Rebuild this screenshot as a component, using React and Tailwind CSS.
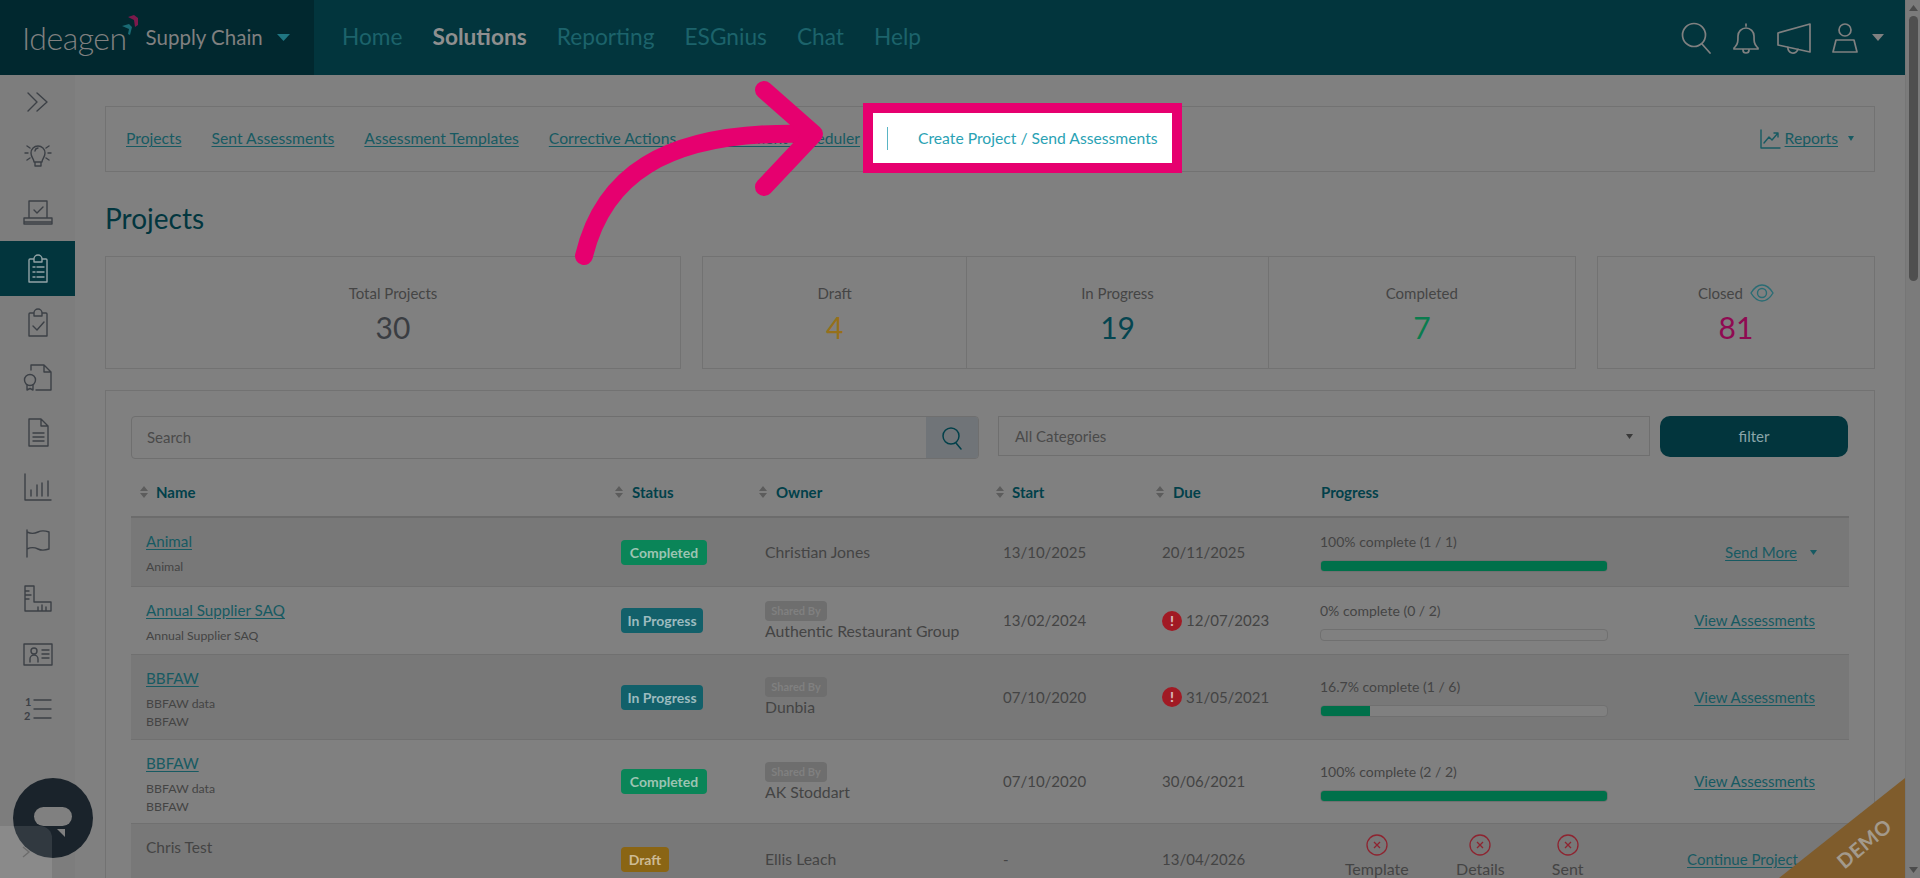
import React from "react";

const Ic = ({ children, s = 32, c = "#3c4046", w = 1.4, v = "0 0 32 32" }) => (
  <svg width={s} height={s} viewBox={v} fill="none" stroke={c} strokeWidth={w} strokeLinecap="round" strokeLinejoin="round">
    {children}
  </svg>
);

const Caret = ({ w = 8, h = 5, c = "#3a3a3a" }) => (
  <svg width={w} height={h} viewBox="0 0 8 5" preserveAspectRatio="none">
    <path d="M0 0H8L4 5Z" fill={c} />
  </svg>
);

const Sort = () => (
  <svg width="8" height="12" viewBox="0 0 8 12" className="shrink-0">
    <path d="M4 0L8 5H0Z M4 12L0 7H8Z" fill="#5c5c5c" />
  </svg>
);

const sideIcons = [
  <Ic><path d="M6 7l9 9-9 9M15 7l10 9-10 9" /></Ic>,
  <Ic>
    <path d="M12 21c0-3-3-4.500-3-9a7 7 0 0 1 14 0c0 4.500-3 6-3 9zM13 21v4h6v-4M13 10a3.500 3.500 0 0 1 3-3" />
    <path d="M3 12h3M26 12h3M5 5l3 2M27 5l-3 2M5 19l3-2M27 19l-3-2" />
  </Ic>,
  <Ic><path d="M7 4h18v17H7zM6 21H2v6h28v-6h-4M2 25h28M12 13l3 3 6-6" /></Ic>,
  <Ic c="#93a3a6"><path d="M8 6h4a4 4 0 0 1 8 0h4a1 1 0 0 1 1 1v22H7V7a1 1 0 0 1 1-1zM12 6v3h8V6M11 14h2M15 14h7M11 19h2M15 19h7M11 24h2M15 24h7" /></Ic>,
  <Ic><path d="M8 6h4a4 4 0 0 1 8 0h4a1 1 0 0 1 1 1v22H7V7a1 1 0 0 1 1-1zM12 6v3h8V6M11 19l4 4 7-8" /></Ic>,
  <Ic><path d="M9 9V4h13l7 7v18H14M22 4v7h7" /><circle cx="8" cy="19" r="5.500" /><path d="M5 24v5l3-1.500 3 1.500v-5" /></Ic>,
  <Ic><path d="M7 3h12l7 7v20H7zM19 3v7h7M11 17h11M11 21h11M11 25h11" /></Ic>,
  <Ic><path d="M3 3v26h26M9 25v-6M15 25v-11M20 25v-13M26 25v-15" /></Ic>,
  <Ic><path d="M5 3v27M5 5c4 2 7 2 11 0s8-1 11 0v17c-3 1-7 2-11 0s-7-2-11 0" /></Ic>,
  <Ic><path d="M3 4h9v16h17v9H3zM3 9h4M3 13h6M3 17h4M16 29v-4M20 29v-6M24 29v-4" /></Ic>,
  <Ic><path d="M2 6h28v21H2zM20 12h7M20 16h7M20 20h7M8 24v-3a4 4 0 0 1 8 0v3" /><circle cx="12" cy="13" r="3" /></Ic>,
  <Ic><path d="M12 7h17M12 16h17M12 25h17" /><text x="3" y="13" fontSize="11" fill="#3c4046" stroke="none" fontFamily="Lato, sans-serif" fontWeight="700">1</text><text x="2" y="27" fontSize="11" fill="#3c4046" stroke="none" fontFamily="Lato, sans-serif" fontWeight="700">2</text></Ic>,
];
const sideHeights = ["h-[54px]", "h-[55px]", "h-[57px]", "h-[55px]", "h-[53px]", "h-[55px]", "h-[55px]", "h-[56px]", "h-[55px]", "h-[56px]", "h-[55px]", "h-[55px]"];

const rows = [
  { h: "h-[69px]", striped: true, name: "Animal", subs: ["Animal"], status: "Completed", owner: "Christian Jones", start: "13/10/2025", due: "20/11/2025", pct: "100% complete (1 / 1)", fill: 100, action: "Send More" },
  { h: "h-[68px]", name: "Annual Supplier SAQ", subs: ["Annual Supplier SAQ"], status: "In Progress", shared: true, owner: "Authentic Restaurant Group", start: "13/02/2024", due: "12/07/2023", late: true, pct: "0% complete (0 / 2)", fill: 0, action: "View Assessments" },
  { h: "h-[85px]", striped: true, name: "BBFAW", subs: ["BBFAW data", "BBFAW"], status: "In Progress", shared: true, owner: "Dunbia", start: "07/10/2020", due: "31/05/2021", late: true, pct: "16.7% complete (1 / 6)", fill: 17, action: "View Assessments" },
  { h: "h-[84px]", name: "BBFAW", subs: ["BBFAW data", "BBFAW"], status: "Completed", shared: true, owner: "AK Stoddart", start: "07/10/2020", due: "30/06/2021", pct: "100% complete (2 / 2)", fill: 100, action: "View Assessments" },
];

const badge = {
  Completed: "w-[86px] bg-[#0a8558] text-[#9cc4b2]",
  "In Progress": "w-[82px] bg-[#12606a] text-[#9dbbbf]",
  Draft: "w-[48px] bg-[#8a6514] text-[#cdbb94]",
};

const Badge = ({ s }) => (
  <span className={`flex h-[25px] items-center justify-center rounded-[4px] text-[14px] font-bold ${badge[s]}`}>{s}</span>
);

const Stat = ({ label, value, color, className, eye }) => (
  <div className={`flex h-full flex-col items-center pt-[26px] ${className}`}>
    <div className="flex h-[20px] items-center gap-[7px] text-[15px] leading-[20px] text-[#454545]">
      {label}
      {eye && (
        <svg width="24" height="18" viewBox="0 0 24 18" fill="none" stroke="#2a6c74" strokeWidth="1.4">
          <path d="M1 9C4 4 8 1 12 1s8 3 11 8c-3 5-7 8-11 8S4 14 1 9z" />
          <circle cx="12" cy="9" r="4.500" />
        </svg>
      )}
    </div>
    <div className={`mt-[6px] text-[30px] leading-[36px] ${color}`}>{value}</div>
  </div>
);

const A = ({ children, className = "" }) => (
  <a className={`text-[#175a62] underline underline-offset-2 ${className}`}>{children}</a>
);

const Miss = ({ label, w }) => (
  <div className={`flex flex-col items-center ${w}`}>
    <svg width="22" height="22" viewBox="0 0 22 22" fill="none" stroke="#8e2430" strokeWidth="1.3">
      <circle cx="11" cy="11" r="10" />
      <path d="M8 8l6 6M14 8l-6 6" />
    </svg>
    <span className="mt-[5px] text-[16px] leading-[16px] text-[#444444]">{label}</span>
  </div>
);

const Alert = () => (
  <span className="flex h-[20px] w-[20px] items-center justify-center rounded-full bg-[#a11a24] text-[14px] font-black leading-none text-[#d8b8b8]">!</span>
);

const Row = ({ r }) => (
  <div className={`grid ${r.h} grid-cols-[490px_144px_238px_159px_158px_1fr] border-b border-[#707070] text-[15.8px] text-[#444444] ${r.striped ? "bg-[#787878]" : ""}`}>
    <div className="pl-[15px] pt-[13px]">
      <A className="block w-fit text-[15.2px] leading-[20px]">{r.name}</A>
      <div className="mt-[7px]">
        {r.subs.map((s, i) => (
          <div key={i} className="text-[12.3px] leading-[18px] text-[#444444]">{s}</div>
        ))}
      </div>
    </div>
    <div className="flex items-center"><Badge s={r.status} /></div>
    <div className="flex flex-col justify-center whitespace-nowrap leading-[20px]">
      {r.shared && <span className="flex h-[20px] w-[62px] items-center justify-center rounded-[4px] bg-[#6e6e6e] text-[11px] font-bold text-[#808080]">Shared By</span>}
      <span>{r.owner}</span>
    </div>
    <div className="flex items-center text-[15px]">{r.start}</div>
    <div className="flex items-center gap-[4px] text-[15px]">
      {r.late && <Alert />}
      {r.due}
    </div>
    <div className="flex items-center justify-between pr-[34px]">
      <div className="flex w-[288px] flex-col">
        <span className="text-[14px] leading-[20px]">{r.pct}</span>
        <div className="mt-[8px] h-[12px] overflow-hidden rounded-[4px] border border-[#707070] bg-[#808080]">
          <div className="h-full bg-[#00704a]" style={{ width: `${r.fill}%` }} />
        </div>
      </div>
      <div className="flex items-center gap-[13px] text-[15px]">
        <A>{r.action}</A>
        {r.action === "Send More" && <span className="-mr-[2px]"><Caret w={7} h={5} c="#175a62" /></span>}
      </div>
    </div>
  </div>
);

export default function App() {
  return (
    <div className="relative flex h-[878px] w-[1920px] overflow-hidden bg-[#808080] font-['Lato','Noto_Sans',sans-serif]">
      <div className="flex w-[1905px] flex-col">
        {/* top bar */}
        <header className="flex h-[75px] shrink-0 items-center bg-[#02353d]">
          <div className="flex h-full w-[314px] items-center bg-[#01282f] pl-[22px]">
            <span className="relative text-[32px] font-light leading-none tracking-[-0.5px] text-[#808080]">
              Ideagen
              <svg width="20" height="24" viewBox="0 0 20 24" className="absolute -right-[14px] -top-[9px]">
                <path d="M7 4l6-2 4 3v7l-3 2-1-7z" fill="#7c1a4c" />
                <path d="M1 13l7-2 3 3-2 8-2-1 1-5z" fill="#1a6a74" />
              </svg>
            </span>
            <span className="ml-[19px] whitespace-nowrap text-[20.500px] text-[#808080]">Supply Chain</span>
            <span className="ml-[14px]"><Caret w={13} h={7} c="#1f7682" /></span>
          </div>
          <nav className="flex items-center gap-[30px] pl-[28px] text-[22.700px] text-[#1c636b]">
            <span>Home</span>
            <span className="font-bold text-[#8f8f8f]">Solutions</span>
            <span>Reporting</span>
            <span>ESGnius</span>
            <span>Chat</span>
            <span>Help</span>
          </nav>
          <div className="ml-auto flex items-center pr-[21px]">
            <Ic s={32} c="#808080" w={1.7}><circle cx="14" cy="13" r="11.500" /><path d="M22 22l8 9" /></Ic>
            <span className="ml-[18px]">
              <Ic s={32} c="#808080" w={1.7}><path d="M16 2v2M5 25c3-3 3-6 3-11a8 8 0 0 1 16 0c0 5 0 8 3 11l1 1v1H4v-1zM13 28a3 3 0 0 0 6 0" /></Ic>
            </span>
            <span className="ml-[14px]">
              <Ic s={36} c="#808080" w={1.7} v="0 0 36 36"><path d="M2 13l32-9v28l-32-7zM2 13v12M12 27a5 5 0 0 0 10 2" /></Ic>
            </span>
            <span className="ml-[17px]">
              <Ic s={32} c="#808080" w={1.7}><circle cx="16" cy="8" r="6" /><path d="M7 18h18l3 12H4z" /></Ic>
            </span>
            <span className="ml-[11px]"><Caret w={12} h={7} c="#808080" /></span>
          </div>
        </header>

        <div className="flex min-h-0 flex-1">
          {/* sidebar */}
          <aside className="flex w-[75px] shrink-0 flex-col bg-[#7d7d7d]">
            {sideIcons.map((ic, i) => (
              <div key={i} className={`flex ${sideHeights[i]} items-center justify-center ${i === 3 ? "bg-[#02353d]" : ""}`}>{ic}</div>
            ))}
          </aside>

          {/* content */}
          <main className="min-w-0 flex-1 px-[30px] pt-[31px]">
            <div className="flex h-[66px] items-center border border-[#727272] pl-[20px] pr-[20px] text-[15.700px]">
              <div className="flex items-center gap-[30px] whitespace-nowrap">
                <A>Projects</A>
                <A>Sent Assessments</A>
                <A>Assessment Templates</A>
                <A>Corrective Actions</A>
                <A>Assessment Scheduler</A>
              </div>
              <div className="ml-auto flex items-center">
                <Ic s={22} c="#175a62" w={1.4} v="0 0 22 22"><path d="M2 2v18h19M5 15l5-6 3 3 6-7M15 5h4v4" /></Ic>
                <A className="ml-[4px]">Reports</A>
                <span className="ml-[10px]"><Caret w={6} h={5} c="#175a62" /></span>
              </div>
            </div>

            <h1 className="mb-[19px] mt-[27px] h-[38px] text-[28px] font-normal leading-[38px] text-[#02363f]">Projects</h1>

            <div className="flex h-[113px] gap-[21px]">
              <div className="w-[576px] border border-[#727272]">
                <Stat label="Total Projects" value="30" color="text-[#3a3d42]" />
              </div>
              <div className="flex w-[874px] border border-[#727272]">
                <Stat label="Draft" value="4" color="text-[#96701a]" className="w-[264px]" />
                <Stat label="In Progress" value="19" color="text-[#054550]" className="w-[302px] border-l border-[#727272]" />
                <Stat label="Completed" value="7" color="text-[#0a7c4e]" className="w-[308px] border-l border-[#727272]" />
              </div>
              <div className="w-[278px] border border-[#727272]">
                <Stat label="Closed" value="81" color="text-[#8f0a52]" eye />
              </div>
            </div>

            <section className="mt-[21px] h-[520px] overflow-hidden border border-[#727272] px-[25px] pt-[25px]">
              <div className="flex items-start">
                <div className="flex h-[43px] w-[848px] items-center overflow-hidden rounded-[4px] border border-[#6f6f6f]">
                  <span className="flex-1 pl-[15px] text-[15px] text-[#4a4a4a]">Search</span>
                  <span className="flex h-full w-[52px] items-center justify-center bg-[#707478]">
                    <Ic s={24} c="#02404a" w={1.5} v="0 0 24 24"><circle cx="11" cy="10" r="8" /><path d="M16 17l5 6" /></Ic>
                  </span>
                </div>
                <div className="ml-[19px] flex h-[40px] w-[652px] items-center justify-between border border-[#6f6f6f] pl-[16px] pr-[16px] text-[15px] text-[#4a4a4a]">
                  All Categories
                  <Caret w={7} h={5} />
                </div>
                <button className="ml-[10px] flex h-[41px] w-[188px] items-center justify-center rounded-[10px] bg-[#02353d] text-[15px] text-[#8aa5a9]">filter</button>
              </div>

              <div className="mb-[14px] mt-[23px] grid h-[20px] grid-cols-[490px_144px_238px_159px_158px_1fr] text-[15px] font-bold leading-[20px] text-[#02404a]">
                <div className="flex items-center gap-[8px] pl-[9px]"><Sort />Name</div>
                <div className="-ml-[6px] flex items-center gap-[9px]"><Sort />Status</div>
                <div className="-ml-[6px] flex items-center gap-[9px]"><Sort />Owner</div>
                <div className="-ml-[7px] flex items-center gap-[8px]"><Sort />Start</div>
                <div className="-ml-[6px] flex items-center gap-[9px]"><Sort />Due</div>
                <div className="flex items-center pl-[1px]">Progress</div>
              </div>

              <div className="border-t-2 border-[#6c6c6c]">
                {rows.map((r, i) => <Row key={i} r={r} />)}
                <div className="grid h-[70px] grid-cols-[490px_144px_238px_159px_158px_1fr] bg-[#787878] text-[15.800px] text-[#444444]">
                  <div className="pl-[15px] pt-[13px] text-[15.500px] leading-[20px]">Chris Test</div>
                  <div className="flex items-center"><Badge s="Draft" /></div>
                  <div className="flex items-center">Ellis Leach</div>
                  <div className="flex items-center text-[15px]">-</div>
                  <div className="flex items-center text-[15px]">13/04/2026</div>
                  <div className="flex items-center justify-between pr-[51px]">
                    <div className="flex w-[288px] items-start self-start pt-[10px]">
                      <Miss label="Template" w="w-[114px]" />
                      <Miss label="Details" w="w-[94px]" />
                      <Miss label="Sent" w="w-[81px]" />
                    </div>
                    <A className="whitespace-nowrap text-[15px]">Continue Project</A>
                  </div>
                </div>
              </div>
            </section>
          </main>
        </div>
      </div>

      {/* page scrollbar */}
      <div className="flex w-[15px] shrink-0 flex-col items-center justify-between border-l border-[#767676] bg-[#7b7b7b] py-[5px]">
        <div className="flex flex-col items-center gap-[5px]">
          <span className="rotate-180"><Caret w={9} h={6} c="#4c4c4c" /></span>
          <div className="h-[265px] w-[9px] rounded-full bg-[#4f4f4f]" />
        </div>
        <Caret w={9} h={6} c="#4c4c4c" />
      </div>

      {/* chat launcher */}
      <div className="absolute left-[13px] top-[778px] h-[80px] w-[80px] rounded-full bg-[#1a232b]">
        <div className="absolute left-[21px] top-[29px] h-[19px] w-[38px] rounded-full bg-[#808080]" />
        <svg width="8" height="8" viewBox="0 0 8 8" className="absolute left-[44px] top-[51px]"><path d="M0 0H8V8Z" fill="#808080" /></svg>
      </div>
      <div className="absolute bottom-0 left-0 flex h-[52px] w-[52px] items-center justify-center rounded-tr-[12px] bg-white/10">
        <svg width="10" height="14" viewBox="0 0 10 14" fill="none" stroke="#6c6c6c" strokeWidth="1.4"><path d="M2 2l6 5-6 5" /></svg>
      </div>

      {/* demo corner */}
      <svg width="126" height="100" viewBox="0 0 126 100" className="absolute left-[1779px] top-[778px]">
        <path d="M126 0V100H0Z" fill="#7f5c2c" />
      </svg>
      <span className="absolute left-[1832px] top-[831px] -rotate-[40deg] text-[20px] font-bold leading-[24px] tracking-[0.5px] text-[#a39a8c]">DEMO</span>

      {/* highlighted element */}
      <div className="absolute left-[863px] top-[103px] flex h-[70px] w-[319px] items-center border-[10px] border-[#e6006f] bg-white pl-[14px]">
        <span className="h-[23px] w-px bg-[#5ab5c4]" />
        <span className="ml-[30px] whitespace-nowrap pt-[1px] text-[15.700px] text-[#2aa2b4]">Create Project / Send Assessments</span>
      </div>

      {/* pointer arrow */}
      <svg width="300" height="200" viewBox="0 0 300 200" fill="none" stroke="#e6006f" strokeWidth="18" strokeLinecap="round" strokeLinejoin="round" className="absolute left-[560px] top-[75px]">
        <path d="M24 181C42 106 98 54 250 59" />
        <path d="M204 15L254 59L204 112" />
      </svg>
    </div>
  );
}
